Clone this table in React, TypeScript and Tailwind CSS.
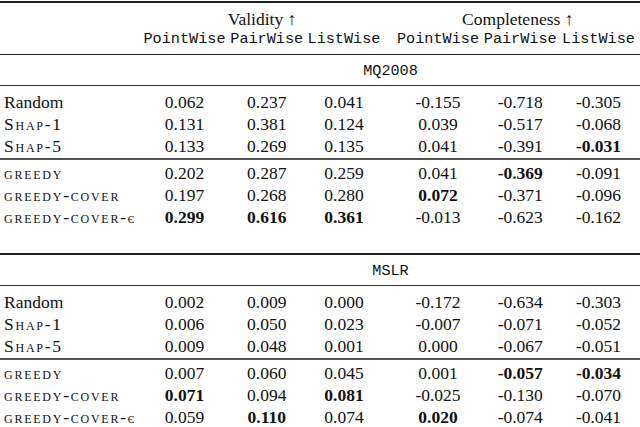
import React from "react";

type Section = {
  name: string;
  base: [string, string[]][];
  ours: [string, string[]][];
};

const sections: Section[] = [
  {
    name: "MQ2008",
    base: [
      ["Random", ["0.062", "0.237", "0.041", "-0.155", "-0.718", "-0.305"]],
      ["Shap-1", ["0.131", "0.381", "0.124", "0.039", "-0.517", "-0.068"]],
      ["Shap-5", ["0.133", "0.269", "0.135", "0.041", "-0.391", "*-0.031"]],
    ],
    ours: [
      ["greedy", ["0.202", "0.287", "0.259", "0.041", "*-0.369", "-0.091"]],
      ["greedy-cover", ["0.197", "0.268", "0.280", "*0.072", "-0.371", "-0.096"]],
      ["greedy-cover-", ["*0.299", "*0.616", "*0.361", "-0.013", "-0.623", "-0.162"]],
    ],
  },
  {
    name: "MSLR",
    base: [
      ["Random", ["0.002", "0.009", "0.000", "-0.172", "-0.634", "-0.303"]],
      ["Shap-1", ["0.006", "0.050", "0.023", "-0.007", "-0.071", "-0.052"]],
      ["Shap-5", ["0.009", "0.048", "0.001", "0.000", "-0.067", "-0.051"]],
    ],
    ours: [
      ["greedy", ["0.007", "0.060", "0.045", "0.001", "*-0.057", "*-0.034"]],
      ["greedy-cover", ["*0.071", "0.094", "*0.081", "-0.025", "-0.130", "-0.070"]],
      ["greedy-cover-", ["0.059", "*0.110", "0.074", "*0.020", "-0.074", "-0.041"]],
    ],
  },
];

const cols =
  "grid grid-cols-[141px_87px_77.5px_77px_12.5px_86px_78.5px_78px] h-[22px] items-center";

const mono = "[font-family:'Liberation_Mono',monospace] text-[15.2px]";

const Cell = ({ v }: { v: string }) => {
  const bold = v.startsWith("*");
  return (
    <div className={`text-center ${bold ? "font-bold" : ""}`}>
      {bold ? v.slice(1) : v}
    </div>
  );
};

const DataRow = ({ label, vals, caps }: { label: string; vals: string[]; caps: boolean }) => (
  <div className={cols}>
    <div
      className={`pl-[4px] whitespace-nowrap ${
        caps ? "[font-variant-caps:small-caps] tracking-[0.1em]" : ""
      }`}
    >
      {label}
      {label.endsWith("-") && <span className="text-[14px] tracking-normal">є</span>}
    </div>
    <Cell v={vals[0]} />
    <Cell v={vals[1]} />
    <Cell v={vals[2]} />
    <div />
    <Cell v={vals[3]} />
    <Cell v={vals[4]} />
    <Cell v={vals[5]} />
  </div>
);

const SectionRows = ({ s }: { s: Section }) => (
  <>
    <div className="mt-[5px] h-[22px] flex items-center">
      <div className="w-[141px]" />
      <div className={`flex-1 text-center ${mono}`}>{s.name}</div>
    </div>
    <div className="mt-[3px] h-px bg-[#333]" />
    <div className="mt-[3px]">
      {s.base.map(([l, v]) => (
        <DataRow key={l} label={l} vals={v} caps={l !== "Random"} />
      ))}
    </div>
    <div className="mt-[3px] h-[2px] bg-[#555]" />
    <div>
      {s.ours.map(([l, v]) => (
        <DataRow key={l} label={l} vals={v} caps />
      ))}
    </div>
  </>
);

const methodHeads = ["PointWise", "PairWise", "ListWise"];

export default function App() {
  return (
    <div className="w-[640px] h-[427px] bg-white text-[#111] [font-family:'Liberation_Serif',serif] text-[17.5px] pt-px overflow-hidden">
      <div className="h-[2px] bg-[#222]" />
      <div className="mt-[3px] h-[22px] grid grid-cols-[141px_242px_12.5px_244.5px] items-center">
        <div />
        <div className="text-center">Validity ↑</div>
        <div />
        <div className="text-center">Completeness ↑</div>
      </div>
      <div className={`${cols} ${mono}`}>
        <div />
        {methodHeads.map((h) => (
          <div key={"v" + h} className="text-center">{h}</div>
        ))}
        <div />
        {methodHeads.map((h) => (
          <div key={"c" + h} className="text-center">{h}</div>
        ))}
      </div>
      <div className="mt-[4px] h-px bg-[#222]" />
      <SectionRows s={sections[0]} />
      <div className="mt-[27px] h-[2px] bg-[#222]" />
      <SectionRows s={sections[1]} />
      <div className="mt-[2px] h-[2px] bg-[#222]" />
    </div>
  );
}
